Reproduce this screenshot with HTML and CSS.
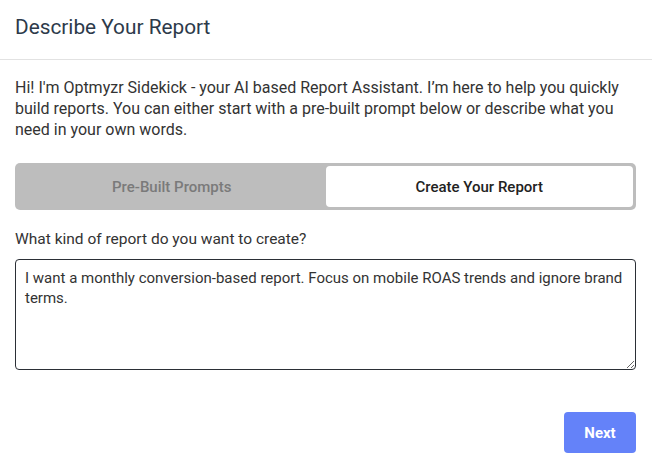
FILE: index.html
```html
<!DOCTYPE html>
<html lang="en">
<head>
  <meta charset="UTF-8">
  <title>Describe Your Report</title>
  <link rel="stylesheet" href="styles.css">
</head>
<body>
  <div class="modal">
    <div class="modal-header">Describe Your Report</div>
    <div class="modal-body">
      <p class="intro">Hi! I'm Optmyzr Sidekick - your AI based Report Assistant. I’m here to help you quickly build reports. You can either start with a pre-built prompt below or describe what you need in your own words.</p>

      <div class="tabs">
        <button class="tab">Pre-Built Prompts</button>
        <button class="tab active">Create Your Report</button>
      </div>

      <label class="field-label" for="reportText">What kind of report do you want to create?</label>
      <textarea id="reportText" class="report-input">I want a monthly conversion-based report. Focus on mobile ROAS trends and ignore brand terms.</textarea>

      <div class="footer">
        <button class="btn-next">Next</button>
      </div>
    </div>
  </div>
</body>
</html>
```

FILE: styles.css
```css
body {
  margin: 0;
  background: #fff;
  font-family: Roboto, "Liberation Sans", Arial, sans-serif;
  color: #333;
}
.modal {
  width: 652px;
}
.modal-header {
  height: 60px;
  padding: 0 15px 5px;
  display: flex;
  align-items: center;
  font-size: 20.8px;
  color: #2d3a4a;
  border-bottom: 1px solid #e2e2e2;
  box-sizing: border-box;
}
.modal-body {
  padding: 17px 16px 0 15px;
}
.intro {
  margin: 0 0 23px;
  font-size: 16px;
  line-height: 21px;
  color: #333;
}
.tabs {
  display: flex;
  padding: 3px;
  background: #bdbdbd;
  border-radius: 5px;
  margin-bottom: 20px;
}
.tab {
  flex: 1;
  height: 41px;
  border: none;
  background: transparent;
  font-family: inherit;
  font-size: 15px;
  font-weight: 500;
  color: #7a7a7a;
  border-radius: 4px;
  cursor: pointer;
}
.tab.active {
  background: #fff;
  color: #222;
}
.field-label {
  display: block;
  font-size: 15.5px;
  color: #333;
  margin-bottom: 11px;
}
.report-input {
  display: block;
  width: 100%;
  height: 111px;
  box-sizing: border-box;
  padding: 8px 9px;
  font-family: inherit;
  font-size: 15px;
  line-height: 20px;
  color: #333;
  border: 1px solid #2b2f36;
  border-radius: 4px;
  resize: vertical;
}
.footer {
  display: flex;
  justify-content: flex-end;
  padding-top: 42px;
}
.btn-next {
  width: 72px;
  height: 41px;
  border: none;
  border-radius: 4px;
  background: #6482f9;
  color: #fff;
  font-family: inherit;
  font-size: 15px;
  font-weight: 700;
  cursor: pointer;
}
```
